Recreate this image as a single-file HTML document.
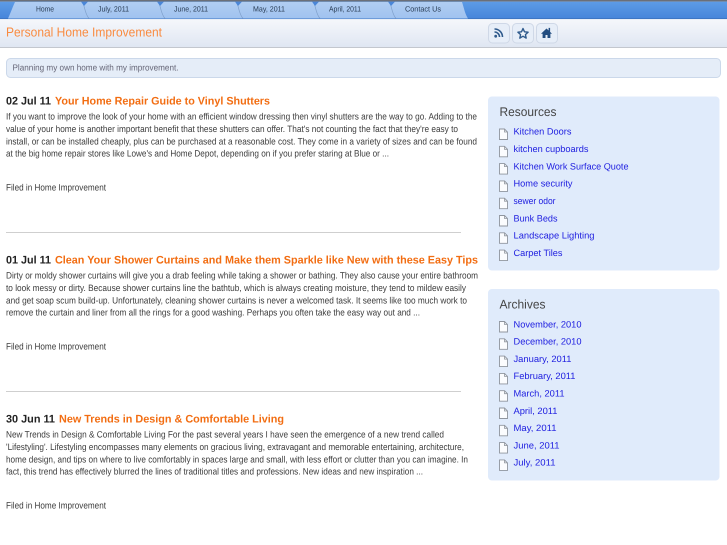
<!DOCTYPE html>
<html><head><meta charset="utf-8"><title>Personal Home Improvement</title>
<style>
html,body{margin:0;padding:0;background:#fff;width:727px;height:545px;overflow:hidden}
svg{display:block;font-family:"Liberation Sans",sans-serif;text-rendering:geometricPrecision;filter:blur(0.3px)}
.n{font-size:7.6px;fill:#2a3d55}
.b{font-size:9.2px;fill:#3c3c3c}
.d{font-size:11px;font-weight:bold;fill:#222}
.t{font-size:11px;font-weight:bold;fill:#f26d12}
.l{font-size:9.2px;fill:#2020e0}
.h{font-size:12.5px;fill:#444}
</style></head><body>
<svg width="727" height="545" viewBox="0 0 727 545" xmlns="http://www.w3.org/2000/svg">
<defs>
<linearGradient id="top" x1="0" y1="0" x2="0" y2="1"><stop offset="0" stop-color="#5d9be6"/><stop offset="1" stop-color="#4685da"/></linearGradient>
<linearGradient id="hd" x1="0" y1="0" x2="0" y2="1"><stop offset="0" stop-color="#f5f7fb"/><stop offset="1" stop-color="#dfe6f2"/></linearGradient>
<linearGradient id="tab" x1="0" y1="0" x2="0" y2="1"><stop offset="0" stop-color="#b0cdf2"/><stop offset="1" stop-color="#a0c2ef"/></linearGradient>
<g id="doc"><path d="M0.5 0.5H5.5L8.5 3.5V11H0.5Z" fill="#fbfcfe" stroke="#8f959e" stroke-width="0.9"/><path d="M5.5 0.5V3.5H8.5" fill="none" stroke="#8f959e" stroke-width="0.8"/></g>
</defs>
<rect width="727" height="1.6" fill="#6b6f78"/>
<rect y="1.6" width="727" height="17" fill="url(#top)"/>
<rect y="18" width="727" height="1.2" fill="#3d76c4"/>
<path d="M8 18.5C11 12 13 6 15 2H462C464 8 465 14 468 18.5Z" fill="url(#tab)"/>
<g fill="none" stroke="#7f9fca" stroke-width="0.7">
<path d="M83 3C85 8 85 14 89 18.5"/>
<path d="M159 3C161 8 161 14 165 18.5"/>
<path d="M237 3C239 8 239 14 243 18.5"/>
<path d="M314 3C316 8 316 14 320 18.5"/>
<path d="M390 3C392 8 392 14 396 18.5"/>
</g>
<g fill="#4a86d8">
<path d="M81 1.6H88L84 6Z"/>
<path d="M157 1.6H164L160 6Z"/>
<path d="M235 1.6H242L238 6Z"/>
<path d="M312 1.6H319L315 6Z"/>
<path d="M388 1.6H395L391 6Z"/>
</g>
<text class="n" x="36" y="11.5" textLength="18" lengthAdjust="spacingAndGlyphs">Home</text>
<text class="n" x="98" y="11.5" textLength="31" lengthAdjust="spacingAndGlyphs">July, 2011</text>
<text class="n" x="174" y="11.5" textLength="34" lengthAdjust="spacingAndGlyphs">June, 2011</text>
<text class="n" x="253" y="11.5" textLength="32" lengthAdjust="spacingAndGlyphs">May, 2011</text>
<text class="n" x="329" y="11.5" textLength="32" lengthAdjust="spacingAndGlyphs">April, 2011</text>
<text class="n" x="405" y="11.5" textLength="36" lengthAdjust="spacingAndGlyphs">Contact Us</text>

<rect y="19.2" width="727" height="28" fill="url(#hd)"/>
<rect y="47" width="727" height="1" fill="#c3c7ce"/>
<text x="6" y="36.5" font-size="13" fill="#f98b40" textLength="156" lengthAdjust="spacingAndGlyphs">Personal Home Improvement</text>

<g fill="#e7eef8" stroke="#cfd8e7" stroke-width="1">
<rect x="488.5" y="23.5" width="21" height="19.5" rx="4"/>
<rect x="512.5" y="23.5" width="21" height="19.5" rx="4"/>
<rect x="536.5" y="23.5" width="21" height="19.5" rx="4"/>
</g>
<g fill="none" stroke="#2f5a8c">
<circle cx="495.7" cy="36.2" r="1.4" fill="#2f5a8c" stroke="none"/>
<path d="M494.5 32a5 5 0 0 1 5 5" stroke-width="1.6"/>
<path d="M494.5 29a8 8 0 0 1 8 8" stroke-width="1.6"/>
<path d="M523 28.5l1.5 3.3 3.6.4-2.7 2.4.8 3.5-3.2-1.9-3.2 1.9.8-3.5-2.7-2.4 3.6-.4z" stroke-width="1.4" stroke-linejoin="round" fill="#f2f6fb"/>
</g>
<path d="M546.5 28.5l-5.5 5.2h1.6v4.3h2.9v-3h2v3h2.9v-4.3h1.6l-1.9-1.8v-4h-1.5v2.6z" fill="#234d80"/>

<rect x="6.5" y="58.5" width="714" height="19" rx="4" fill="#e5edf8" stroke="#cbd8ea"/>
<text x="12.5" y="70.3" font-size="8.8" fill="#667" textLength="166" lengthAdjust="spacingAndGlyphs">Planning my own home with my improvement.</text>

<text class="d" x="6" y="104.5" textLength="45" lengthAdjust="spacingAndGlyphs">02 Jul 11</text>
<text class="t" x="55" y="104.5" textLength="215" lengthAdjust="spacingAndGlyphs">Your Home Repair Guide to Vinyl Shutters</text>
<text class="b" x="6" y="119.5" textLength="471" lengthAdjust="spacingAndGlyphs">If you want to improve the look of your home with an efficient window dressing then vinyl shutters are the way to go. Adding to the</text>
<text class="b" x="6" y="132" textLength="452" lengthAdjust="spacingAndGlyphs">value of your home is another important benefit that these shutters can offer. That's not counting the fact that they're easy to</text>
<text class="b" x="6" y="144.3" textLength="471" lengthAdjust="spacingAndGlyphs">install, or can be installed cheaply, plus can be purchased at a reasonable cost. They come in a variety of sizes and can be found</text>
<text class="b" x="6" y="156.7" textLength="383" lengthAdjust="spacingAndGlyphs">at the big home repair stores like Lowe's and Home Depot, depending on if you prefer staring at Blue or ...</text>
<text class="b" x="6" y="190.5" textLength="100" lengthAdjust="spacingAndGlyphs">Filed in Home Improvement</text>
<rect x="6" y="232" width="455" height="1" fill="#cfcfcf"/>

<text class="d" x="6" y="263.5" textLength="45" lengthAdjust="spacingAndGlyphs">01 Jul 11</text>
<text class="t" x="55" y="263.5" textLength="423" lengthAdjust="spacingAndGlyphs">Clean Your Shower Curtains and Make them Sparkle like New with these Easy Tips</text>
<text class="b" x="6" y="278.5" textLength="472" lengthAdjust="spacingAndGlyphs">Dirty or moldy shower curtains will give you a drab feeling while taking a shower or bathing. They also cause your entire bathroom</text>
<text class="b" x="6" y="291" textLength="460" lengthAdjust="spacingAndGlyphs">to look messy or dirty. Because shower curtains line the bathtub, which is always creating moisture, they tend to mildew easily</text>
<text class="b" x="6" y="303.3" textLength="461" lengthAdjust="spacingAndGlyphs">and get soap scum build-up. Unfortunately, cleaning shower curtains is never a welcomed task. It seems like too much work to</text>
<text class="b" x="6" y="315.7" textLength="414" lengthAdjust="spacingAndGlyphs">remove the curtain and liner from all the rings for a good washing. Perhaps you often take the easy way out and ...</text>
<text class="b" x="6" y="349.5" textLength="100" lengthAdjust="spacingAndGlyphs">Filed in Home Improvement</text>
<rect x="6" y="391" width="455" height="1" fill="#cfcfcf"/>

<text class="d" x="6" y="422.5" textLength="49" lengthAdjust="spacingAndGlyphs">30 Jun 11</text>
<text class="t" x="59" y="422.5" textLength="225" lengthAdjust="spacingAndGlyphs">New Trends in Design &amp; Comfortable Living</text>
<text class="b" x="6" y="437.5" textLength="438" lengthAdjust="spacingAndGlyphs">New Trends in Design &amp; Comfortable Living For the past several years I have seen the emergence of a new trend called</text>
<text class="b" x="6" y="450" textLength="458" lengthAdjust="spacingAndGlyphs">'Lifestyling'. Lifestyling encompasses many elements on gracious living, extravagant and memorable entertaining, architecture,</text>
<text class="b" x="6" y="462.3" textLength="462" lengthAdjust="spacingAndGlyphs">home design, and tips on where to live comfortably in spaces large and small, with less effort or clutter than you can imagine. In</text>
<text class="b" x="6" y="474.7" textLength="417" lengthAdjust="spacingAndGlyphs">fact, this trend has effectively blurred the lines of traditional titles and professions. New ideas and new inspiration ...</text>
<text class="b" x="6" y="508.5" textLength="100" lengthAdjust="spacingAndGlyphs">Filed in Home Improvement</text>

<rect x="488" y="96.5" width="231.5" height="174" rx="4" fill="#e0ebfb"/>
<text class="h" x="499.5" y="116" textLength="57" lengthAdjust="spacingAndGlyphs">Resources</text>
<use href="#doc" x="499" y="128.5"/><text class="l" x="513.5" y="134.5" textLength="58" lengthAdjust="spacingAndGlyphs">Kitchen Doors</text>
<use href="#doc" x="499" y="145.8"/><text class="l" x="513.5" y="152" textLength="75" lengthAdjust="spacingAndGlyphs">kitchen cupboards</text>
<use href="#doc" x="499" y="163.1"/><text class="l" x="513.5" y="169.3" textLength="115" lengthAdjust="spacingAndGlyphs">Kitchen Work Surface Quote</text>
<use href="#doc" x="499" y="180.4"/><text class="l" x="513.5" y="186.6" textLength="59" lengthAdjust="spacingAndGlyphs">Home security</text>
<use href="#doc" x="499" y="197.7"/><text class="l" x="513.5" y="204" textLength="42" lengthAdjust="spacingAndGlyphs">sewer odor</text>
<use href="#doc" x="499" y="215"/><text class="l" x="513.5" y="221.3" textLength="44" lengthAdjust="spacingAndGlyphs">Bunk Beds</text>
<use href="#doc" x="499" y="232.3"/><text class="l" x="513.5" y="238.6" textLength="81" lengthAdjust="spacingAndGlyphs">Landscape Lighting</text>
<use href="#doc" x="499" y="249.6"/><text class="l" x="513.5" y="256" textLength="49" lengthAdjust="spacingAndGlyphs">Carpet Tiles</text>

<rect x="488" y="289" width="231.5" height="191.5" rx="4" fill="#e0ebfb"/>
<text class="h" x="499.5" y="308.5" textLength="46" lengthAdjust="spacingAndGlyphs">Archives</text>
<use href="#doc" x="499" y="321"/><text class="l" x="513.5" y="327.3" textLength="68" lengthAdjust="spacingAndGlyphs">November, 2010</text>
<use href="#doc" x="499" y="338.3"/><text class="l" x="513.5" y="344.6" textLength="68" lengthAdjust="spacingAndGlyphs">December, 2010</text>
<use href="#doc" x="499" y="355.6"/><text class="l" x="513.5" y="361.9" textLength="58" lengthAdjust="spacingAndGlyphs">January, 2011</text>
<use href="#doc" x="499" y="372.9"/><text class="l" x="513.5" y="379.2" textLength="62" lengthAdjust="spacingAndGlyphs">February, 2011</text>
<use href="#doc" x="499" y="390.2"/><text class="l" x="513.5" y="396.5" textLength="51" lengthAdjust="spacingAndGlyphs">March, 2011</text>
<use href="#doc" x="499" y="407.5"/><text class="l" x="513.5" y="413.8" textLength="44" lengthAdjust="spacingAndGlyphs">April, 2011</text>
<use href="#doc" x="499" y="424.8"/><text class="l" x="513.5" y="431.1" textLength="43" lengthAdjust="spacingAndGlyphs">May, 2011</text>
<use href="#doc" x="499" y="442.1"/><text class="l" x="513.5" y="448.4" textLength="46" lengthAdjust="spacingAndGlyphs">June, 2011</text>
<use href="#doc" x="499" y="459.4"/><text class="l" x="513.5" y="465.7" textLength="42" lengthAdjust="spacingAndGlyphs">July, 2011</text>
</svg>
</body></html>
